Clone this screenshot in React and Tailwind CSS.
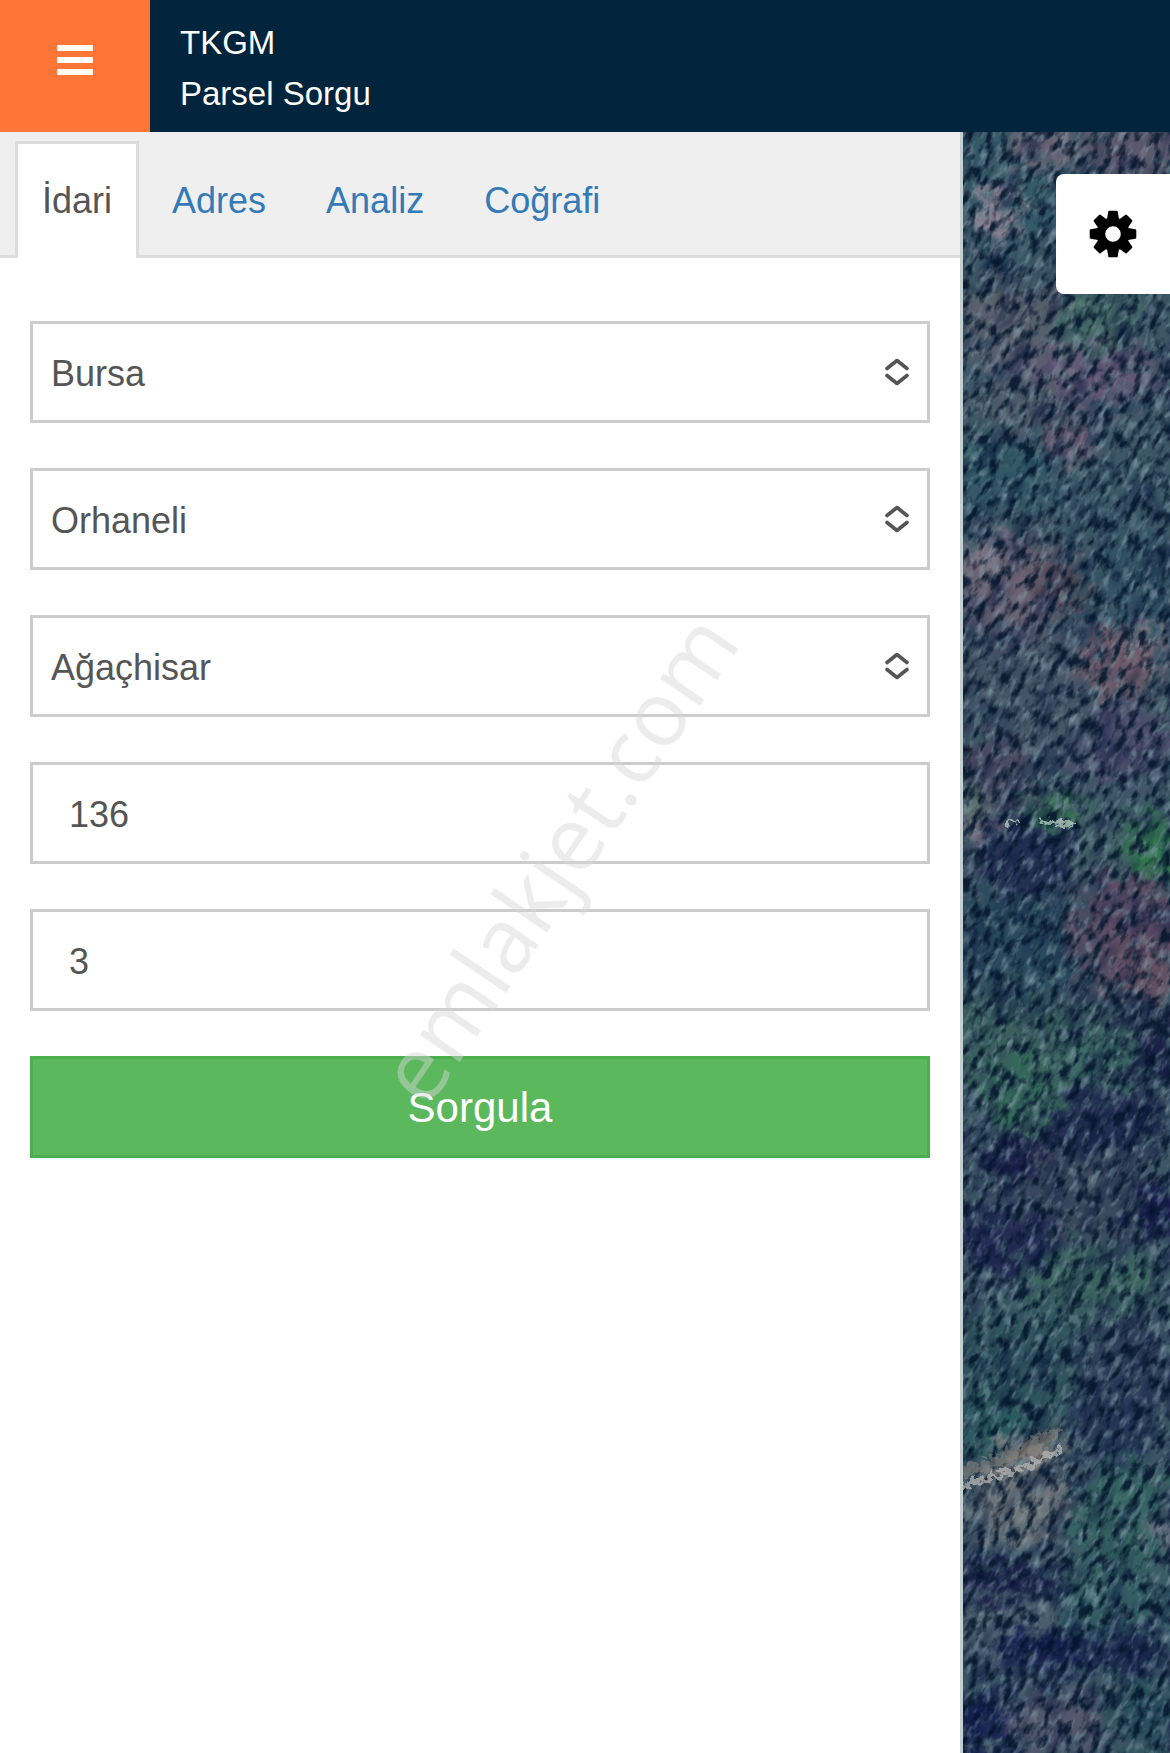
import { useState } from 'react';

const TABS = ['İdari', 'Adres', 'Analiz', 'Coğrafi'];

const SELECTS = [
  { id: 'il', label: 'İl', options: ['Bursa'] },
  { id: 'ilce', label: 'İlçe', options: ['Orhaneli'] },
  { id: 'mahalle', label: 'Mahalle', options: ['Ağaçhisar'] },
];

const INPUTS = [
  { id: 'ada', label: 'Ada' },
  { id: 'parsel', label: 'Parsel' },
];

// soft colour patches under the tree texture: [cx, cy, rx, ry, colour]
const PATCHES = [
  [40, 60, 60, 70, '#2f5a6a'],
  [80, 15, 40, 20, '#6d6478'],
  [170, 20, 50, 30, '#5d5870'],
  [32, 80, 22, 34, '#8d8296'],
  [30, 175, 30, 24, '#5a6668'],
  [70, 200, 70, 40, '#585e70'],
  [130, 190, 40, 40, '#3f6b66'],
  [120, 245, 80, 28, '#65587a'],
  [60, 275, 50, 30, '#4d5c6c'],
  [100, 310, 36, 20, '#6b5675'],
  [40, 340, 60, 40, '#2d5a69'],
  [150, 370, 70, 40, '#37596a'],
  [50, 455, 60, 50, '#6c6276'],
  [20, 420, 24, 16, '#80788a'],
  [95, 450, 30, 26, '#5e5160'],
  [170, 450, 50, 50, '#2e5366'],
  [60, 540, 70, 40, '#43536a'],
  [160, 530, 40, 36, '#705a6b'],
  [185, 505, 24, 8, '#8b8591'],
  [150, 610, 60, 40, '#4c4d70'],
  [30, 640, 40, 40, '#4b4a66'],
  [90, 590, 40, 40, '#42566a'],
  [90, 678, 26, 12, '#2f8a45'],
  [10, 672, 12, 14, '#5b8a62'],
  [190, 715, 30, 26, '#267a48'],
  [60, 725, 50, 40, '#1f2f58'],
  [130, 710, 30, 20, '#3f6268'],
  [10, 700, 14, 24, '#76687e'],
  [60, 810, 70, 50, '#244a60'],
  [165, 800, 55, 62, '#604c68'],
  [180, 850, 40, 25, '#674f63'],
  [140, 880, 50, 30, '#2c405a'],
  [50, 910, 70, 50, '#35605f'],
  [150, 920, 60, 30, '#366b65'],
  [60, 960, 40, 40, '#2d6a58'],
  [190, 920, 20, 40, '#171f49'],
  [60, 1030, 50, 26, '#1c2352'],
  [140, 990, 60, 34, '#1f2d57'],
  [90, 1040, 26, 16, '#55465c'],
  [130, 1060, 70, 50, '#374860'],
  [40, 1110, 50, 36, '#232c5c'],
  [190, 1080, 20, 30, '#141a52'],
  [130, 1150, 70, 30, '#35665f'],
  [60, 1230, 70, 60, '#2b5561'],
  [160, 1240, 50, 60, '#2b3f5e'],
  [30, 1290, 50, 30, '#235c60'],
  [55, 1375, 55, 34, '#6f767a'],
  [70, 1320, 34, 14, '#8c8580'],
  [150, 1300, 40, 40, '#233a5e'],
  [160, 1390, 50, 60, '#2d6562'],
  [200, 1400, 12, 18, '#77788e'],
  [40, 1450, 70, 16, '#181d4e'],
  [50, 1500, 60, 30, '#4b6173'],
  [150, 1470, 60, 40, '#2d5f66'],
  [90, 1520, 60, 20, '#15215a'],
  [160, 1520, 50, 26, '#1a2a57'],
  [20, 1590, 40, 34, '#15235a'],
  [100, 1590, 60, 30, '#525670'],
  [180, 1580, 40, 40, '#26505f'],
];

function MapView() {
  return (
    <svg
      viewBox="0 0 207 1621"
      preserveAspectRatio="xMidYMid slice"
      className="absolute inset-0 h-full w-full"
      aria-hidden="true"
    >
      <defs>
        <filter id="patch" x="-20%" y="-5%" width="140%" height="110%" colorInterpolationFilters="sRGB">
          <feGaussianBlur stdDeviation="9" result="soft" />
          <feTurbulence type="fractalNoise" baseFrequency="0.06" numOctaves="4" seed="4" result="n" />
          <feDisplacementMap in="soft" in2="n" scale="60" xChannelSelector="R" yChannelSelector="G" />
          <feColorMatrix type="saturate" values="0.85" />
        </filter>
        <filter id="ridge">
          <feTurbulence type="fractalNoise" baseFrequency="0.15" numOctaves="3" seed="8" result="n" />
          <feDisplacementMap in="SourceGraphic" in2="n" scale="18" xChannelSelector="R" yChannelSelector="G" />
        </filter>
        <filter id="grove" x="0" y="0" width="100%" height="100%" colorInterpolationFilters="sRGB">
          <feTurbulence type="fractalNoise" baseFrequency="0.045 0.022" numOctaves="3" seed="19" />
          <feColorMatrix values="0 0 0 0 0.04  0 0 0 0 0.09  0 0 0 0 0.24  3.2 0 0 0 -1.5" />
        </filter>
        <filter id="shade" x="0" y="0" width="100%" height="100%" colorInterpolationFilters="sRGB">
          <feTurbulence type="fractalNoise" baseFrequency="0.13 0.06" numOctaves="4" seed="11" />
          <feColorMatrix values="0 0 0 0 0.01  0 0 0 0 0.08  0 0 0 0 0.17  3.6 0 0 0 -1.65" />
        </filter>
        <filter id="light" x="0" y="0" width="100%" height="100%" colorInterpolationFilters="sRGB">
          <feTurbulence type="fractalNoise" baseFrequency="0.14 0.06" numOctaves="3" seed="27" />
          <feColorMatrix values="0 0 0 0 0.5  0 0 0 0 0.6  0 0 0 0 0.65  0 2 0 0 -0.98" />
        </filter>
      </defs>
      <rect width="207" height="1621" fill="#3d5766" />
      <g filter="url(#patch)">
        {PATCHES.map(([cx, cy, rx, ry, fill]) => (
          <ellipse key={`${cx}-${cy}`} cx={cx} cy={cy} rx={rx} ry={ry} fill={fill} />
        ))}
      </g>
      <g transform="rotate(28 103 810)">
        <rect x="-400" y="-60" width="1000" height="1760" filter="url(#grove)" opacity="0.5" />
        <rect x="-400" y="-60" width="1000" height="1760" filter="url(#light)" />
        <rect x="-400" y="-60" width="1000" height="1760" filter="url(#shade)" opacity="0.85" />
      </g>
      <g filter="url(#ridge)" fill="none" strokeLinecap="round" opacity="0.75">
        <path d="M0 1340 L40 1328 L92 1302" stroke="#8f8579" strokeWidth="12" opacity="0.7" />
        <path d="M0 1354 L30 1345 L60 1336 L96 1318" stroke="#b9b4b3" strokeWidth="6" />
        <path d="M44 690 L52 690 M82 690 L108 692" stroke="#b5cfc0" strokeWidth="5" />
      </g>
    </svg>
  );
}

function GearIcon() {
  return (
    <svg viewBox="-24 -24 48 48" className="h-12 w-12" aria-hidden="true">
      <circle r="12.2" fill="none" stroke="#000" strokeWidth="8.8" />
      {[0, 45, 90, 135, 180, 225, 270, 315].map((angle) => (
        <path
          key={angle}
          d="M-6 -15 L-4.7 -22.4 Q-4.5 -23.3 -3.6 -23.3 H3.6 Q4.5 -23.3 4.7 -22.4 L6 -15 Z"
          transform={`rotate(${angle})`}
        />
      ))}
    </svg>
  );
}

function SelectField({ id, label, options }) {
  return (
    <div className="relative">
      <select
        id={id}
        aria-label={label}
        className="block h-[102px] w-full appearance-none rounded-none border-[3px] border-[#ccc] bg-white px-[18px] pt-1 text-4xl text-[#555]"
      >
        {options.map((option) => (
          <option key={option}>{option}</option>
        ))}
      </select>
      <svg
        viewBox="0 0 24 28"
        className="pointer-events-none absolute top-[37px] right-[21px] h-7 w-6"
        fill="none"
        stroke="#555"
        strokeWidth="3.6"
        strokeLinecap="round"
        strokeLinejoin="round"
        aria-hidden="true"
      >
        <path d="M2 10.5 12 2.5 22 10.5M2 17.5 12 25.5 22 17.5" />
      </svg>
    </div>
  );
}

export default function App() {
  const [activeTab, setActiveTab] = useState('İdari');
  const [values, setValues] = useState({ ada: '136', parsel: '3' });

  return (
    <div className="relative flex min-h-screen flex-col overflow-hidden bg-white font-['Liberation_Sans',Arial,sans-serif]">
      <header className="flex h-[132px] bg-[#02243c]">
        <button type="button" aria-label="Menü" className="flex w-[150px] justify-center bg-[#ff7637] pt-[45px]">
          <svg viewBox="0 0 36 30" className="h-[30px] w-9" fill="#fff" aria-hidden="true">
            <rect width="36" height="6" rx="1" />
            <rect y="12" width="36" height="6" rx="1" />
            <rect y="24" width="36" height="6" rx="1" />
          </svg>
        </button>
        <h1 className="pt-[17px] pl-[30px] text-[33px] leading-[51px] text-white">
          TKGM
          <br />
          Parsel Sorgu
        </h1>
      </header>

      <div className="flex flex-1">
        <main className="flex-1 border-r-[3px] border-[#c3cfd1] bg-white">
          <nav>
            <ul className="flex gap-[6px] border-b-[3px] border-[#ddd] bg-[#efefef] pt-[9px] pl-[15px]">
              {TABS.map((tab) => (
                <li key={tab} className="-mb-[3px]">
                  <a
                    href="#"
                    onClick={() => setActiveTab(tab)}
                    className={
                      tab === activeTab
                        ? 'block border-[3px] border-b-0 border-[#ddd] bg-white px-6 py-[30px] text-4xl leading-[54px] text-[#555]'
                        : 'block border-[3px] border-b-0 border-transparent px-6 py-[30px] text-4xl leading-[54px] text-[#337ab7]'
                    }
                  >
                    {tab}
                  </a>
                </li>
              ))}
            </ul>
          </nav>

          <form className="flex flex-col gap-[45px] px-[30px] pt-[63px]" onSubmit={(e) => e.preventDefault()}>
            {SELECTS.map((field) => (
              <SelectField key={field.id} {...field} />
            ))}
            {INPUTS.map(({ id, label }) => (
              <input
                key={id}
                id={id}
                type="text"
                aria-label={label}
                value={values[id]}
                onChange={(e) => setValues({ ...values, [id]: e.target.value })}
                className="block h-[102px] w-full border-[3px] border-[#ccc] bg-white px-9 pt-1 text-4xl text-[#555]"
              />
            ))}
            <button
              type="submit"
              className="h-[102px] w-full border-[3px] border-[#4cae4c] bg-[#5cb85c] text-[42px] text-white"
            >
              Sorgula
            </button>
          </form>
        </main>

        <aside className="relative w-[207px] overflow-hidden bg-[#33505f]">
          <MapView />
          <button
            type="button"
            aria-label="Ayarlar"
            className="absolute top-[42px] right-0 flex h-[120px] w-[114px] items-center justify-center rounded-l-lg bg-white"
          >
            <GearIcon />
          </button>
        </aside>
      </div>

      {/* Watermark */}
      <div className="pointer-events-none absolute inset-0 flex items-center justify-center pr-[58px] pb-10">
        <span className="-rotate-56 font-['Open_Sans',sans-serif] text-[90px] leading-none text-[rgba(214,214,214,0.47)]">
          emlakjet.com
        </span>
      </div>
    </div>
  );
}
